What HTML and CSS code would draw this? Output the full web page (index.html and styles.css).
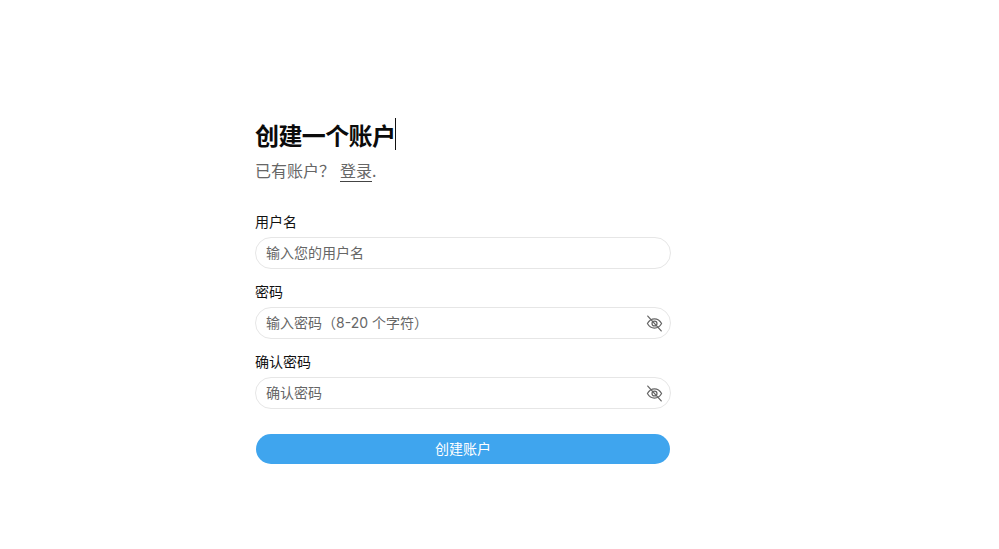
FILE: index.html
```html
<!DOCTYPE html>
<html lang="zh">
<head>
    <meta charset="UTF-8">
    <meta name="viewport" content="width=device-width, initial-scale=1.0">
    <title>创建一个账户</title>
    <link rel="stylesheet" href="styles.css">
</head>
<body>
    <section class="signup">
        <h1 class="title"><span class="title-text">创建一个账户</span></h1>
        <p class="subtitle">已有账户？<a class="login" href="#">登录</a>.</p>

        <form class="form">
            <div class="field">
                <label class="label">用户名</label>
                <div class="input-wrap">
                    <input class="input" type="text" placeholder="输入您的用户名">
                </div>
            </div>
            <div class="field">
                <label class="label">密码</label>
                <div class="input-wrap">
                    <input class="input" type="password" placeholder="输入密码（8-20 个字符）">
                    <svg class="eye" viewBox="0 0 24 24" fill="none" stroke="currentColor" stroke-width="1.800" stroke-linecap="round" stroke-linejoin="round">
                        <path d="M2 12c2.500-4.300 5.800-6.500 10-6.500s7.500 2.200 10 6.500c-2.500 4.300-5.800 6.500-10 6.500s-7.500-2.200-10-6.500z"/>
                        <circle cx="12" cy="12" r="3.500"/>
                        <path d="M2.500 1.500l19 21"/>
                    </svg>
                </div>
            </div>
            <div class="field">
                <label class="label">确认密码</label>
                <div class="input-wrap">
                    <input class="input" type="password" placeholder="确认密码">
                    <svg class="eye" viewBox="0 0 24 24" fill="none" stroke="currentColor" stroke-width="1.800" stroke-linecap="round" stroke-linejoin="round">
                        <path d="M2 12c2.500-4.300 5.800-6.500 10-6.500s7.500 2.200 10 6.500c-2.500 4.300-5.800 6.500-10 6.500s-7.500-2.200-10-6.500z"/>
                        <circle cx="12" cy="12" r="3.500"/>
                        <path d="M2.500 1.500l19 21"/>
                    </svg>
                </div>
            </div>
            <button class="submit" type="button">创建账户</button>
        </form>
    </section>
</body>
</html>
```

FILE: styles.css
```css
*{margin: 0;padding: 0;box-sizing: border-box;}
body{
    width: 100%;
    height: 549px;
    overflow: hidden;
    background: #fff;
    font-family: Inter, "Noto Sans CJK SC", sans-serif;
}
.signup{width: 416px; margin-left: 255px; padding-top: 118px;}
.title{height: 35px; font-size: 24px; line-height: 34px; font-weight: 700; color: #0b0b0b; letter-spacing: -0.6px;}
.title-text{display: inline-block; border-right: 1px solid #111; height: 32px; line-height: 34px; font-family: "Noto Sans CJK SC", sans-serif;}
.subtitle{margin-top: 5px; font-size: 16px; line-height: 24px; color: #666; font-family: "Noto Sans CJK SC", sans-serif;}
.login{margin-left: 5px; color: #666; text-decoration: none; border-bottom: 1px solid #444; display: inline-block; line-height: 21px;}
.form{margin-top: 30px;}
.field{margin-bottom: 13px;}
.label{display: block; height: 25px; font-size: 14px; line-height: 18px; color: #111; font-family: "Noto Sans CJK SC", sans-serif;}
.input-wrap{position: relative; height: 32px;}
.input{
    width: 100%; height: 32px; padding: 0 40px 2px 10px;
    border: 1px solid #e6e6e6; border-radius: 16px;
    font-family: inherit; font-size: 14px; color: #333; outline: none;
}
.input::placeholder{color: #666; opacity: 1;}
.eye{position: absolute; right: 8px; top: 8px; width: 17px; height: 17px; color: #666;}
.submit{
    display: block; width: 414px; height: 30px; margin: 25px 0 0 1px; padding-bottom: 2px;
    border: none; border-radius: 15px;
    background-color: #3fa5ee; color: #fff;
    font-family: inherit; font-size: 14px;
}
```
